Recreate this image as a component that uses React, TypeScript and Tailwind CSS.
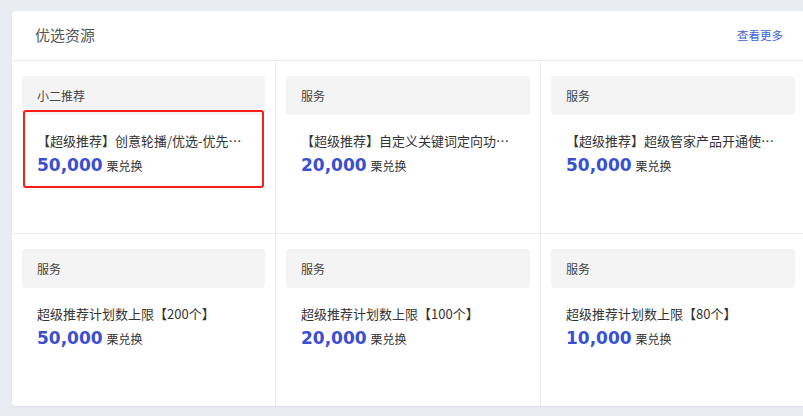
import React from 'react';

interface Resource {
  tag: string;
  title: string;
  price: string;
  highlighted?: boolean;
}

const resources: Resource[] = [
  { tag: '小二推荐', title: '【超级推荐】创意轮播/优选-优先展示位资源包', price: '50,000', highlighted: true },
  { tag: '服务', title: '【超级推荐】自定义关键词定向功能开通', price: '20,000' },
  { tag: '服务', title: '【超级推荐】超级管家产品开通使用权限', price: '50,000' },
  { tag: '服务', title: '超级推荐计划数上限【200个】', price: '50,000' },
  { tag: '服务', title: '超级推荐计划数上限【100个】', price: '20,000' },
  { tag: '服务', title: '超级推荐计划数上限【80个】', price: '10,000' },
];

const cjk = "font-['Noto_Sans_CJK_SC','Noto_Sans',sans-serif]";

const ResourceCell: React.FC<{ item: Resource; index: number }> = ({ item, index }) => {
  const lastCol = index % 3 === 2;
  const lastRow = index >= 3;

  return (
    <div
      className={`relative px-[10px] pt-[15px] ${lastRow ? 'h-[172px]' : 'h-[173px] border-b border-[#ececec]'} ${
        lastCol ? '' : 'border-r border-[#ececec]'
      }`}
    >
      {/* category strip */}
      <div className="flex h-[39px] items-center rounded bg-[#f4f4f4] px-[15px] text-[12px] text-[#444]">
        {item.tag}
      </div>

      <div className="mt-4 truncate pl-[15px] pr-[12px] text-[13px] leading-5 text-[#333]">{item.title}</div>

      <div className="mt-[2px] flex items-baseline gap-[4px] px-[15px]">
        <span className="font-['DejaVu_Sans',sans-serif] text-[17px] font-bold leading-6 text-[#3a50d2]">
          {item.price}
        </span>
        <span className="text-[12px] text-[#333]">栗兑换</span>
      </div>

      {item.highlighted && (
        <div className="pointer-events-none absolute left-[11px] top-[49px] h-[78px] w-[241px] rounded-[3px] border-2 border-[#fb1c1c]" />
      )}
    </div>
  );
};

export default function App() {
  return (
    <div className={`h-[416px] w-[803px] overflow-hidden bg-[#e9ecf3] pl-3 pt-[11px] ${cjk}`}>
      <div className="w-[793px] rounded-sm bg-white shadow-[0_1px_2px_rgba(0,0,0,0.06)]">
        {/* Header */}
        <div className="flex h-[50px] items-center justify-between border-b border-[#ececec] pl-[23px] pr-[22px]">
          <span className="text-[15px] text-[#555]">优选资源</span>
          <span className="text-[11.5px] text-[#3d5fd9]">查看更多</span>
        </div>

        {/* Grid */}
        <div className="grid grid-cols-[264px_265px_264px]">
          {resources.map((item, i) => (
            <ResourceCell key={i} item={item} index={i} />
          ))}
        </div>
      </div>
    </div>
  );
}
